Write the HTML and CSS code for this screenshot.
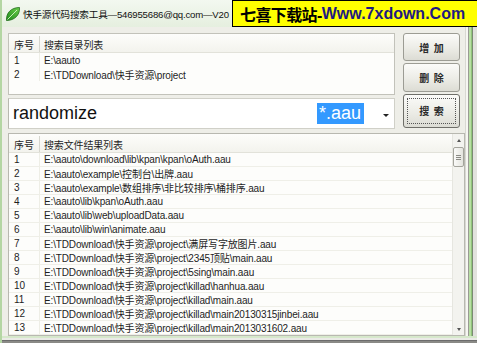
FILE: index.html
```html
<!DOCTYPE html>
<html lang="zh-CN">
<head>
<meta charset="utf-8">
<title>快手源代码搜索工具</title>
<link rel="stylesheet" href="styles.css">
</head>
<body>
<div class="window">
  <div class="titlebar">
    <svg class="appicon" width="16" height="16" viewBox="0 0 16 16">
      <defs>
        <linearGradient id="lf" x1="0" y1="1" x2="1" y2="0">
          <stop offset="0" stop-color="#1f8a1c"/>
          <stop offset="1" stop-color="#6cd04c"/>
        </linearGradient>
      </defs>
      <path d="M1.5 14.5 C1 7 6 1.5 14.5 1.5 C15 9 9.5 14.5 1.5 14.5 Z" fill="url(#lf)" stroke="#1d6b18" stroke-width="0.8"/>
      <path d="M2.5 13.5 L12 4" stroke="#d8f5c8" stroke-width="0.9" fill="none"/>
    </svg>
    <span class="title">快手源代码搜索工具—546955686@qq.com—V20</span>
  </div>
  <div class="banner"><span class="bn-cn">七喜下载站-</span><span class="bn-en">Www.7xdown.Com</span></div>
  <div class="middle">
    <div class="client">
      <div class="top">
        <div class="leftcol">
          <div class="list dirlist">
            <div class="hdr"><span class="c1">序号</span><span class="c2">搜索目录列表</span></div>
            <div class="row"><span class="c1">1</span><span class="c2">E:\aauto</span></div>
            <div class="row"><span class="c1">2</span><span class="c2">E:\TDDownload\快手资源\project</span></div>
          </div>
          <div class="inputrow">
            <div class="textbox">randomize</div>
            <div class="combo"><span class="sel">*.aau</span><span class="arrow"></span></div>
          </div>
        </div>
        <div class="buttons">
          <div class="btn">增&nbsp;&nbsp;加</div>
          <div class="btn">删&nbsp;&nbsp;除</div>
          <div class="btn btn-default"><span class="focus">搜&nbsp;&nbsp;索</span></div>
        </div>
      </div>
      <div class="results">
        <div class="listbody">
          <div class="hdr"><span class="c1">序号</span><span class="c2">搜索文件结果列表</span></div>
          <div class="row"><span class="c1">1</span><span class="c2">E:\aauto\download\lib\kpan\kpan\oAuth.aau</span></div>
          <div class="row"><span class="c1">2</span><span class="c2">E:\aauto\example\控制台\出牌.aau</span></div>
          <div class="row"><span class="c1">3</span><span class="c2">E:\aauto\example\数组排序\非比较排序\桶排序.aau</span></div>
          <div class="row"><span class="c1">4</span><span class="c2">E:\aauto\lib\kpan\oAuth.aau</span></div>
          <div class="row"><span class="c1">5</span><span class="c2">E:\aauto\lib\web\uploadData.aau</span></div>
          <div class="row"><span class="c1">6</span><span class="c2">E:\aauto\lib\win\animate.aau</span></div>
          <div class="row"><span class="c1">7</span><span class="c2">E:\TDDownload\快手资源\project\满屏写字放图片.aau</span></div>
          <div class="row"><span class="c1">8</span><span class="c2">E:\TDDownload\快手资源\project\2345顶贴\main.aau</span></div>
          <div class="row"><span class="c1">9</span><span class="c2">E:\TDDownload\快手资源\project\5sing\main.aau</span></div>
          <div class="row"><span class="c1">10</span><span class="c2">E:\TDDownload\快手资源\project\killad\hanhua.aau</span></div>
          <div class="row"><span class="c1">11</span><span class="c2">E:\TDDownload\快手资源\project\killad\main.aau</span></div>
          <div class="row"><span class="c1">12</span><span class="c2">E:\TDDownload\快手资源\project\killad\main20130315jinbei.aau</span></div>
          <div class="row"><span class="c1">13</span><span class="c2">E:\TDDownload\快手资源\project\killad\main2013031602.aau</span></div>
        </div>
        <div class="scrollbar">
          <div class="sb-btn"><span class="up"></span></div>
          <div class="thumb"><i></i><i></i><i></i></div>
          <div class="track"></div>
          <div class="sb-btn"><span class="down"></span></div>
        </div>
      </div>
    </div>
    <div class="rframe"></div>
  </div>
  <div class="bframe"></div>
</div>
</body>
</html>
```
FILE: styles.css
```css
html, body {
  margin: 0;
  padding: 0;
  background: #eeeee8;
}
.window {
  position: relative;
  width: 477px;
  height: 343px;
  overflow: hidden;
  display: flex;
  flex-direction: column;
  background: #eeeee8;
  border-left: 2px solid #b4d6a3;
  box-sizing: border-box;
  font-family: "Liberation Sans", "Noto Sans CJK SC", sans-serif;
  font-size: 10px;
  color: #1e1e1e;
}
.titlebar {
  height: 27px;
  flex: none;
  display: flex;
  align-items: center;
  gap: 2px;
  padding-left: 3px;
  background: linear-gradient(#f3f8f0, #e5efdf);
  box-sizing: border-box;
}
.appicon { flex: none; margin-top: 1px; }
.title {
  white-space: nowrap;
  font-size: 9.6px;
  letter-spacing: -0.2px;
  color: #111;
}
.banner {
  position: absolute;
  left: 230px;
  top: 0;
  width: 250px;
  height: 27px;
  box-sizing: border-box;
  background: #ffff00;
  border: 1px solid #000;
  display: flex;
  align-items: center;
  padding-left: 7px;
  font-weight: bold;
  font-size: 16px;
  white-space: nowrap;
}
.bn-cn { color: #000; letter-spacing: -0.6px; }
.bn-en { color: #1e1a82; }
.middle {
  flex: 1;
  min-height: 0;
  display: flex;
}
.client {
  flex: 1;
  min-width: 0;
  display: flex;
  flex-direction: column;
  padding: 6px 0 0 6px;
}
.top {
  flex: none;
  height: 95px;
  display: flex;
  gap: 8px;
  padding-right: 5px;
}
.leftcol {
  flex: 1;
  display: flex;
  flex-direction: column;
  gap: 3px;
}
.list {
  background: #fdfdfb;
  border: 1px solid #c2c2ba;
  box-sizing: border-box;
}
.dirlist { height: 62px; flex: none; }
.hdr {
  height: 19px;
  display: flex;
  align-items: center;
  padding-top: 2px;
  box-sizing: border-box;
  background: linear-gradient(#fdfdfb, #f3f3ed);
  border-bottom: 1px solid #e2e2da;
}
.row {
  height: 14px;
  display: flex;
  align-items: center;
  box-sizing: border-box;
  white-space: nowrap;
}
.c1 {
  width: 31px;
  flex: none;
  padding-left: 5px;
  box-sizing: border-box;
  align-self: stretch;
  display: flex;
  align-items: center;
  border-right: 1px solid #eeeee6;
}
.hdr .c1 { border-right-color: #d6d6ce; }
.c2 { padding-left: 4px; letter-spacing: -0.15px; }
.inputrow {
  height: 31px;
  flex: none;
  display: flex;
  background: #fff;
  border: 1px solid #d0d0c8;
  border-left-color: #b8b8b0;
  box-sizing: border-box;
}
.textbox {
  flex: 1;
  display: flex;
  align-items: center;
  padding-left: 4px;
  font-size: 18px;
  color: #111;
}
.combo {
  width: 80px;
  flex: none;
  display: flex;
  align-items: center;
  padding-left: 3px;
  box-sizing: border-box;
}
.sel {
  background: #3399ff;
  color: #fff;
  font-size: 18px;
  line-height: 21px;
  height: 21px;
  padding: 0 3px 0 2px;
}
.arrow {
  margin-left: auto;
  margin-right: 5px;
  width: 0;
  height: 0;
  border-left: 3px solid transparent;
  border-right: 3px solid transparent;
  border-top: 3px solid #222;
  margin-top: 3px;
}
.buttons {
  width: 57px;
  flex: none;
  display: flex;
  flex-direction: column;
  gap: 2px;
}
.btn {
  flex: 1;
  display: flex;
  align-items: center;
  justify-content: center;
  border: 1px solid #9c9c94;
  border-radius: 3px;
  background: linear-gradient(#fbfbf9, #ecece6 55%, #dcdcd4);
  font-family: "Noto Sans CJK SC", sans-serif;
  font-weight: bold;
  font-size: 10px;
  color: #2a2a2a;
  box-sizing: border-box;
}
.btn-default {
  border-color: #6e6e68;
  padding: 3px;
}
.focus {
  flex: 1;
  align-self: stretch;
  display: flex;
  align-items: center;
  justify-content: center;
  border: 1px dotted #555;
}
.results {
  margin-top: 5px;
  flex: 1;
  min-height: 0;
  display: flex;
  background: #fdfdfb;
  border: 1px solid #b8b8b0;
  overflow: hidden;
}
.listbody {
  flex: 1;
  min-width: 0;
  overflow: hidden;
}
.results .hdr { height: 19px; }
.results .row { border-bottom: 1px solid #efefe8; }
.scrollbar {
  width: 11px;
  flex: none;
  display: flex;
  flex-direction: column;
  background: #f3f3ef;
  border-left: 1px solid #e6e6e0;
}
.sb-btn {
  height: 12px;
  flex: none;
  display: flex;
  align-items: center;
  justify-content: center;
}
.up, .down {
  width: 0;
  height: 0;
  border-left: 2.5px solid transparent;
  border-right: 2.5px solid transparent;
}
.up { border-bottom: 3px solid #555; }
.down { border-top: 3px solid #555; }
.thumb {
  height: 20px;
  flex: none;
  margin: 1px 0 0;
  border: 1px solid #a4a49c;
  border-radius: 2px;
  background: linear-gradient(to right, #fafaf8, #e4e4de);
  box-sizing: border-box;
  display: flex;
  flex-direction: column;
  align-items: center;
  justify-content: center;
  gap: 1px;
}
.thumb i {
  display: block;
  width: 5px;
  height: 1px;
  background: #8a8a84;
}
.track { flex: 1; }
.rframe {
  width: 12px;
  flex: none;
  background: linear-gradient(to right, #d8d8d2 0 1px, #f6f6f2 1px 3px, #9a9a94 3px 4px, #b8dfa4 4px 6px, #90c47a 6px 7px, #7a8a74 7px 8px, #e2e2de 8px);
}
.bframe {
  height: 7px;
  flex: none;
  background: linear-gradient(#d6e8cb 0 2px, #eaeae6 2px 4px, #6c6c6c 4px 5px, #8a8a86 5px);
}
```
